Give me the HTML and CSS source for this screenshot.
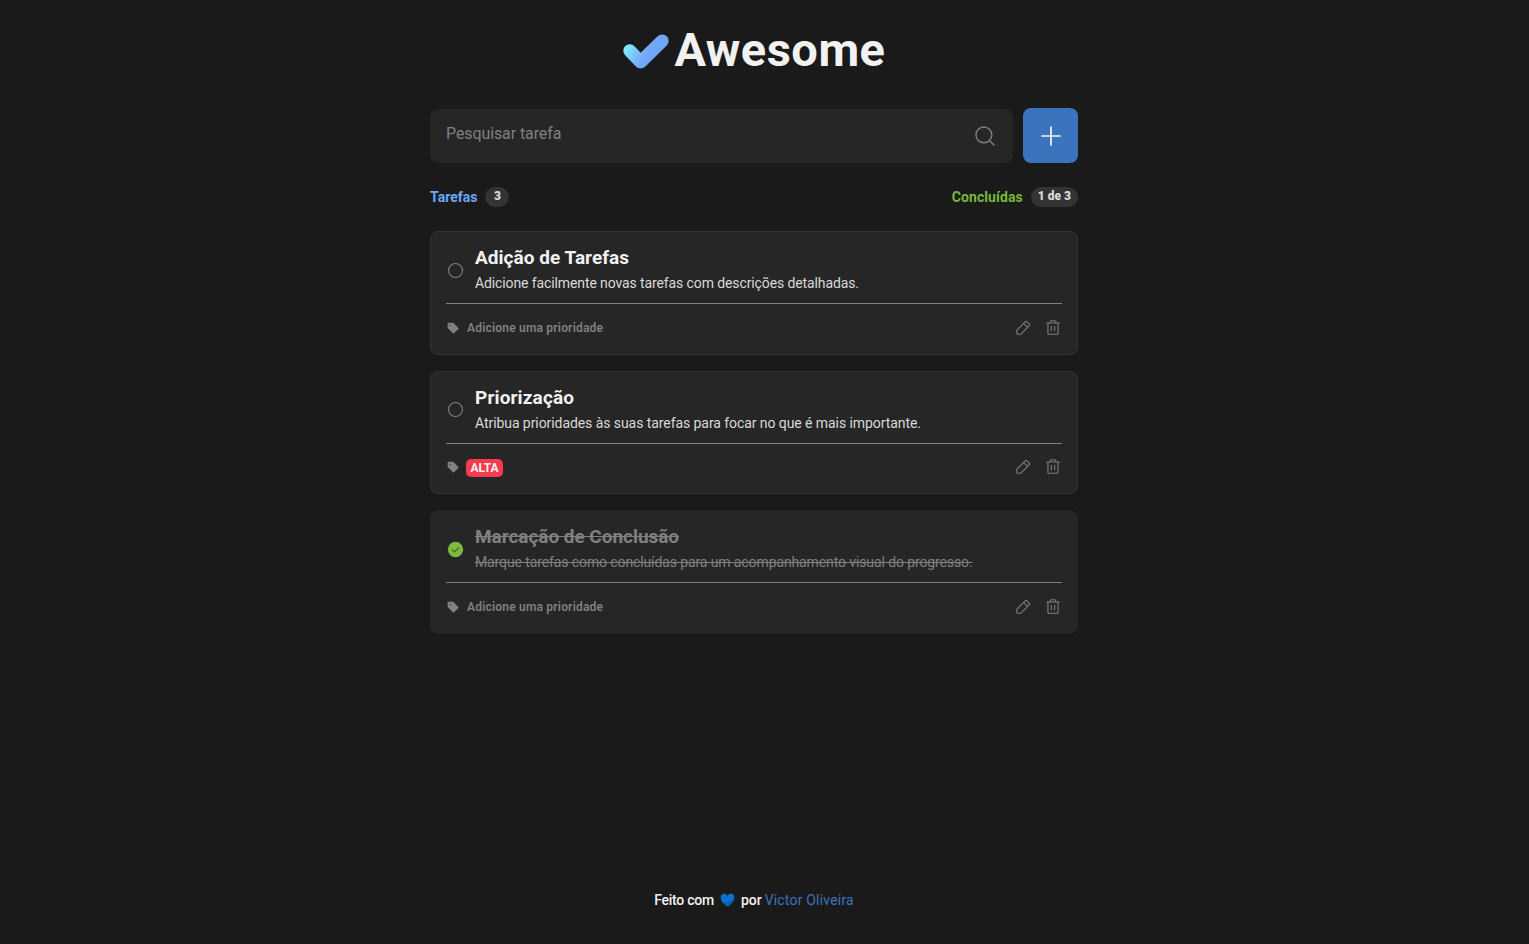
FILE: index.html
```html
<!DOCTYPE html>
<html lang="pt-BR">
<head>
<meta charset="utf-8">
<title>Awesome</title>
<link rel="stylesheet" href="styles.css">
</head>
<body>
<svg class="sprite" aria-hidden="true">
  <symbol id="tag" viewBox="0 0 256 256"><path fill="currentColor" d="M243.31,136,144,36.69A15.86,15.86,0,0,0,132.69,32H40a8,8,0,0,0-8,8v92.69A15.86,15.86,0,0,0,36.69,144L136,243.31a16,16,0,0,0,22.63,0l84.68-84.68a16,16,0,0,0,0-22.63ZM84,96A12,12,0,1,1,96,84,12,12,0,0,1,84,96Z"/></symbol>
  <symbol id="pencil" viewBox="0 0 256 256"><path class="line" d="M92.69,216H48a8,8,0,0,1-8-8V163.31a8,8,0,0,1,2.34-5.65L165.66,34.34a8,8,0,0,1,11.31,0L221.66,79a8,8,0,0,1,0,11.31L98.34,213.66A8,8,0,0,1,92.69,216ZM136,64l56,56"/></symbol>
  <symbol id="trash" viewBox="0 0 256 256"><path class="line" d="M216,56H40M104,104v64M152,104v64M200,56V208a8,8,0,0,1-8,8H64a8,8,0,0,1-8-8V56M168,56V40a16,16,0,0,0-16-16H104A16,16,0,0,0,88,40V56"/></symbol>
  <symbol id="circle" viewBox="0 0 256 256"><circle class="line" cx="128" cy="128" r="94"/></symbol>
  <symbol id="check" viewBox="0 0 256 256"><circle fill="currentColor" cx="128" cy="128" r="103"/><path fill="none" stroke="#262626" stroke-width="13" stroke-linecap="round" stroke-linejoin="round" d="M172,104l-58.7,56L84,132"/></symbol>
</svg>
<div class="page">
  <header class="brand">
    <svg class="logo" viewBox="0 0 46 35">
      <defs><linearGradient id="g" gradientUnits="userSpaceOnUse" x1="1" y1="11" x2="25" y2="25"><stop offset="0" stop-color="#81f3fd"/><stop offset=".8" stop-color="#74acfa"/><stop offset="1" stop-color="#70a5fb"/></linearGradient></defs>
      <path d="M6.8 16.800 17.6 28 39.2 6.900" fill="none" stroke="url(#g)" stroke-width="13" stroke-linecap="round" stroke-linejoin="round"/>
    </svg>
    <h1>Awesome</h1>
  </header>

  <div class="toolbar">
    <div class="search">
      <span class="placeholder">Pesquisar tarefa</span>
      <svg class="glass" viewBox="0 0 256 256"><path class="line" d="M200,116A84,84,0,1,1,32,116A84,84,0,1,1,200,116ZM175.4,175.4,224,224"/></svg>
    </div>
    <div class="add"><svg viewBox="0 0 256 256"><path class="line" d="M40,128H216M128,40V216"/></svg></div>
  </div>

  <div class="summary">
    <div class="stat total"><span>Tarefas</span><b class="pill">3</b></div>
    <div class="stat done"><span>Concluídas</span><b class="pill">1 de 3</b></div>
  </div>

  <main class="tasks">
    <article class="card">
      <div class="info">
        <svg class="mark"><use href="#circle"/></svg>
        <div class="text">
          <h2>Adição de Tarefas</h2>
          <p>Adicione facilmente novas tarefas com descrições detalhadas.</p>
        </div>
      </div>
      <div class="meta">
        <svg class="tag"><use href="#tag"/></svg><span class="label">Adicione uma prioridade</span>
        <div class="actions"><svg><use href="#pencil"/></svg><svg><use href="#trash"/></svg></div>
      </div>
    </article>

    <article class="card short">
      <div class="info">
        <svg class="mark"><use href="#circle"/></svg>
        <div class="text">
          <h2 class="wide">Priorização</h2>
          <p>Atribua prioridades às suas tarefas para focar no que é mais importante.</p>
        </div>
      </div>
      <div class="meta">
        <svg class="tag"><use href="#tag"/></svg><span class="priority">ALTA</span>
        <div class="actions"><svg><use href="#pencil"/></svg><svg><use href="#trash"/></svg></div>
      </div>
    </article>

    <article class="card completed">
      <div class="info">
        <svg class="mark"><use href="#check"/></svg>
        <div class="text">
          <h2>Marcação de Conclusão</h2>
          <p>Marque tarefas como concluídas para um acompanhamento visual do progresso.</p>
        </div>
      </div>
      <div class="meta">
        <svg class="tag"><use href="#tag"/></svg><span class="label">Adicione uma prioridade</span>
        <div class="actions"><svg><use href="#pencil"/></svg><svg><use href="#trash"/></svg></div>
      </div>
    </article>
  </main>

  <footer class="credit">
    <span class="made">Feito com</span>
    <svg class="heart" viewBox="0 0 15 14"><path d="M7.5 13.4C5 11.8.6 8.7.6 4.7.6 2.3 2.2.8 4.1.8 5.6.8 6.9 1.6 7.5 2.9 8.1 1.6 9.4.8 10.9.8 12.8.8 14.4 2.3 14.4 4.7 14.4 8.7 10 11.8 7.5 13.4Z" fill="#0a72cc"/><path d="M14.3 3.7C14.9 8 10.5 11.5 7.5 13.4 6 12.4 4 11 2.5 9 8 10.500 12.500 8 14.3 3.700Z" fill="#0760b0"/></svg>
    <span class="by">por</span>
    <a class="author">Victor Oliveira</a>
  </footer>
</div>
</body>
</html>
```
FILE: styles.css
```css
* { box-sizing: border-box; margin: 0; }
body {
  background: #1a1a1a;
  color: #f2f2f2;
  font-family: Roboto, "Liberation Sans", sans-serif;
  padding-right: 21px;
}
svg { display: block; flex: none; }
.sprite { display: none; }
.line { fill: none; stroke: currentColor; stroke-width: 15; stroke-linecap: round; stroke-linejoin: round; }

.page {
  width: 648px;
  height: 944px;
  margin: 0 auto;
  display: flex;
  flex-direction: column;
}
.brand { display: flex; justify-content: center; gap: 6px; height: 108px; padding-top: 20px; }
.logo { width: 46px; height: 35px; margin-top: 13.5px; }
h1 { font-size: 47px; line-height: 60px; font-weight: 700; letter-spacing: .5px; }

.toolbar { display: flex; align-items: flex-end; gap: 10px; height: 55px; }
.search {
  flex: 1;
  height: 54px;
  display: flex;
  justify-content: space-between;
  padding: 14px 16px;
  border-radius: 8px;
  background: #262626;
  color: #808080;
}
.placeholder { font-size: 16px; line-height: 22px; letter-spacing: -.1px; }
.glass { width: 24px; height: 24px; margin-top: .5px; }
.add {
  display: grid;
  place-items: center;
  width: 55px;
  height: 55px;
  border-radius: 8px;
  background: #3a74bd;
}
.add svg { width: 26px; height: 26px; }
.add .line { stroke-width: 17; }

.summary { display: flex; justify-content: space-between; padding: 24px 0; }
.stat { display: flex; align-items: center; gap: 8px; font-size: 14px; line-height: 20px; font-weight: 700; }
.total { color: #6ca9fb; }
.done { color: #75b83b; letter-spacing: .1px; }
.pill {
  min-width: 24px;
  height: 20px;
  padding: 0 7px;
  border-radius: 10px;
  background: #333;
  color: #d9d9d9;
  font-size: 12px;
  line-height: 19px;
  letter-spacing: 0;
  text-align: center;
}

.tasks { display: flex; flex-direction: column; gap: 16px; }
.card {
  height: 124px;
  padding: 0 15px;
  border: 1px solid #333;
  border-radius: 8px;
  background: #262626;
}
.short { height: 123px; }
.info { display: flex; gap: 10px; height: 72px; padding-top: 14px; border-bottom: 1px solid #808080; }
.mark { width: 19px; height: 19px; margin-top: 14.5px; color: #808080; }
.short .mark { margin-top: 13.5px; }
h2 { font-size: 19px; line-height: 24px; font-weight: 700; letter-spacing: .03px; }
h2.wide { letter-spacing: .14px; }
p { margin-top: 3px; color: #d9d9d9; font-size: 14px; line-height: 20px; letter-spacing: -.11px; white-space: nowrap; }
.short p { letter-spacing: -.07px; }
.meta { display: flex; align-items: center; height: 48px; color: #808080; }
.tag { width: 13px; height: 13px; margin-bottom: 1px; }
.short .tag { margin-bottom: 3px; }
.short .actions { margin-bottom: 2px; }
.label { margin-left: 8px; font-size: 12px; line-height: 16px; font-weight: 600; letter-spacing: .2px; }
.priority {
  height: 18px;
  margin-left: 7px;
  padding: 0 4.5px;
  border-radius: 5px;
  background: #f73a4c;
  color: #f2f2f2;
  font-size: 12px;
  line-height: 18px;
  font-weight: 700;
}
.actions { display: flex; gap: 12px; margin-left: auto; }
.actions svg { width: 18px; height: 18px; }
.completed { border-color: #262626; }
.completed h2, .completed p { color: #808080; text-decoration: line-through; }
.completed h2 { letter-spacing: -.04px; }
.completed .mark { color: #7bbb40; }

.credit { display: flex; justify-content: center; margin-top: auto; padding-bottom: 34px; font-size: 14px; line-height: 20px; }
.made, .by { font-weight: 500; }
.made { letter-spacing: -.25px; }
.heart { width: 15px; height: 14px; margin: 3px 6px 0 6px; }
.author { margin-left: 3px; color: #3a74bd; letter-spacing: .19px; }
```
